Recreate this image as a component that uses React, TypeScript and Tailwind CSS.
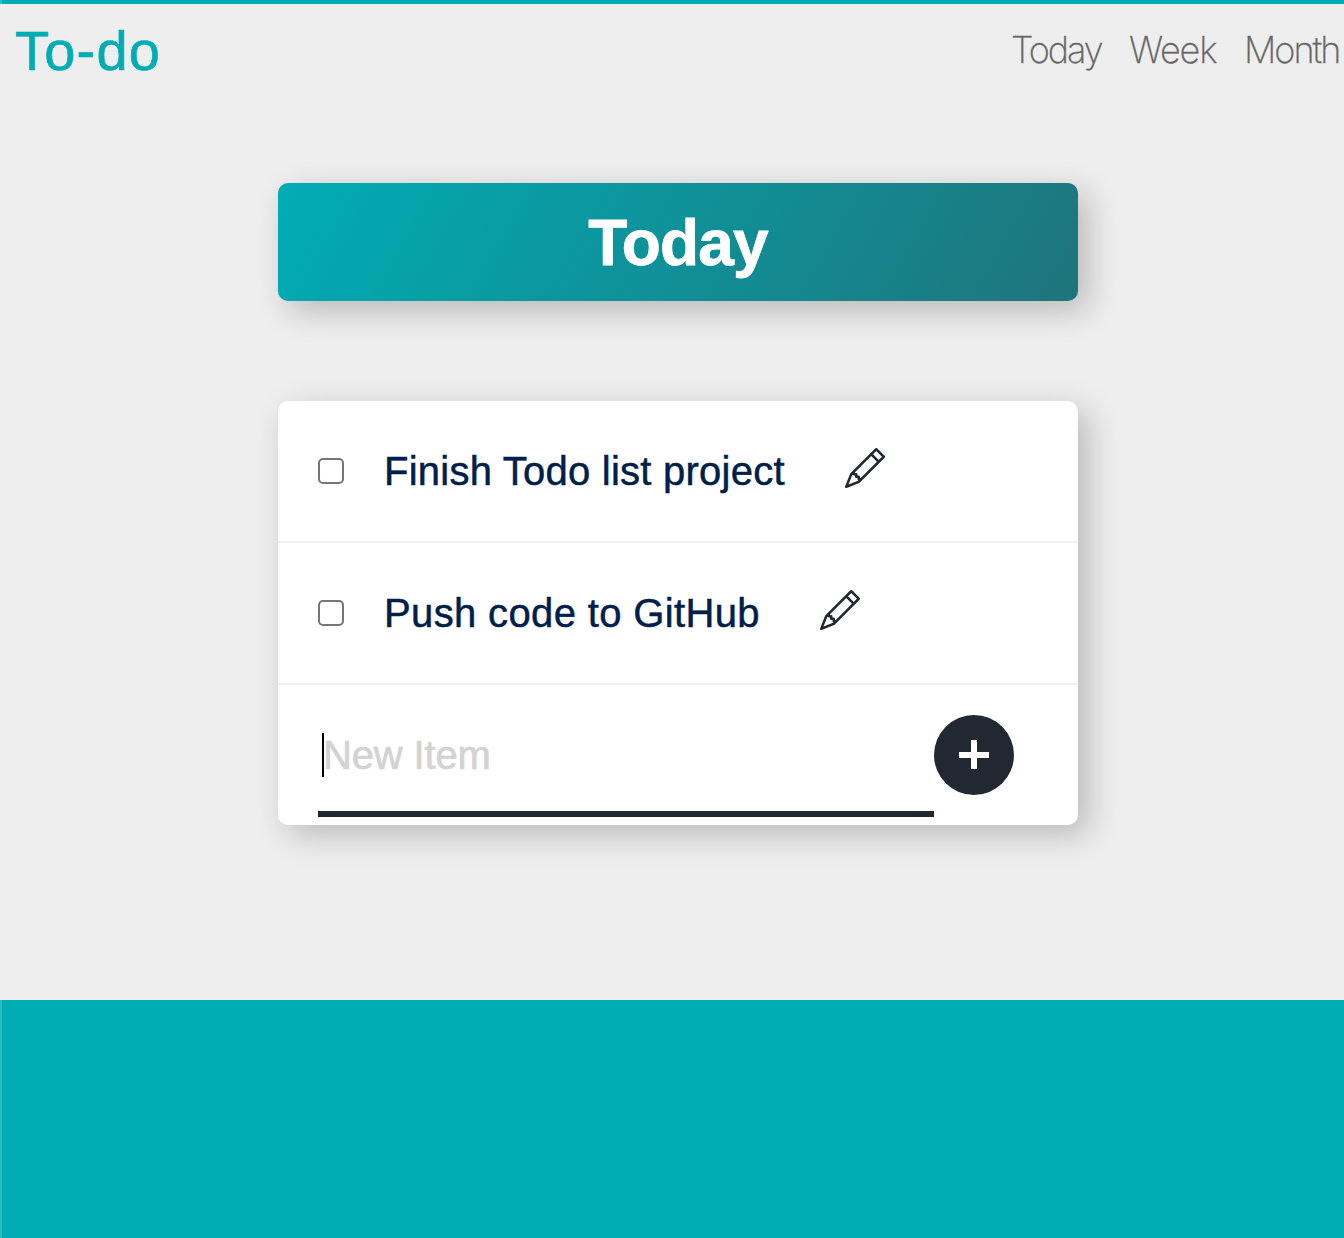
import { BsPencil } from "react-icons/bs";

const items = [
  { text: "Finish Todo list project", tracking: "tracking-[0.24px]", width: "w-[401px]" },
  { text: "Push code to GitHub", tracking: "tracking-[0.36px]", width: "w-[376px]" },
];

export default function App() {
  return (
    <div className="h-[1238px] overflow-hidden bg-[#00adb5] pt-1 font-['Liberation_Sans',Arial,sans-serif] shadow-[inset_2px_0_0_#2dbbc1]">
      <div className="h-[996px] bg-[#eeeeee]">
        <header className="flex h-[94px] items-center justify-between pl-[15px]">
          <h1 className="text-[56px] leading-[94px] tracking-[1.2px] text-[#00adb5] [-webkit-text-stroke:0.6px_#00adb5]">To-do</h1>
          <nav className="flex h-[94px] items-center gap-7 pr-[5px] pb-0.5 font-['Inter','Liberation_Sans',sans-serif] text-[36px] font-extralight text-[#666666] [-webkit-text-stroke:0.3px_#666666]">
            <a className="w-[90px] whitespace-nowrap tracking-[-2px]">Today</a>
            <a className="w-[87px] whitespace-nowrap tracking-[-1.2px]">Week</a>
            <a className="w-[95px] whitespace-nowrap tracking-[-2px]">Month</a>
          </nav>
        </header>
        <main className="ml-[278px] w-[800px] pt-[85px]">
          <div className="flex h-[118px] items-center justify-center rounded-[10px] bg-[linear-gradient(120deg,#00adb5,#1f747b)] shadow-[10px_10px_32px_rgba(0,0,0,0.22)]">
            <h2 className="pt-0.5 text-[64px] font-bold tracking-[-0.8px] text-white [-webkit-text-stroke:0.8px_white]">Today</h2>
          </div>
          <div className="mt-[100px] h-[424px] overflow-hidden rounded-[10px] bg-white shadow-[10px_10px_32px_rgba(0,0,0,0.22)]">
            {items.map((item) => (
              <div key={item.text} className="flex h-[142px] items-center border-b-2 border-[#f1f1f1] pl-10">
                <span className="size-[26px] rounded-[5px] border-2 border-[#767676]" />
                <span className={`ml-10 whitespace-nowrap text-[40px] text-[#00204a] [-webkit-text-stroke:0.5px_#00204a] ${item.tracking} ${item.width}`}>{item.text}</span>
                <BsPencil className="mb-1.5 ml-[60px] size-10 text-[#222831]" />
              </div>
            ))}
            <div className="flex h-[140px] items-start pl-10">
              <div className="flex h-[132px] w-[616px] items-center border-b-[6px] border-[#222831] pl-1">
                <span className="mt-3.5 flex h-11 items-center border-l-2 border-black text-[40px] leading-[44px] text-[#d3d3d3]">
                  <span className="-ml-px tracking-[-0.15px] [-webkit-text-stroke:0.7px_#d3d3d3]">New Item</span>
                </span>
              </div>
              <button className="mt-[30px] flex size-20 items-center justify-center rounded-full bg-[#222831]">
                <svg className="size-[30px]" viewBox="0 0 30 30" fill="white">
                  <path d="M12 0h6v12h12v6H18v11H12V18H0v-6h12z" />
                </svg>
              </button>
            </div>
          </div>
        </main>
      </div>
    </div>
  );
}
